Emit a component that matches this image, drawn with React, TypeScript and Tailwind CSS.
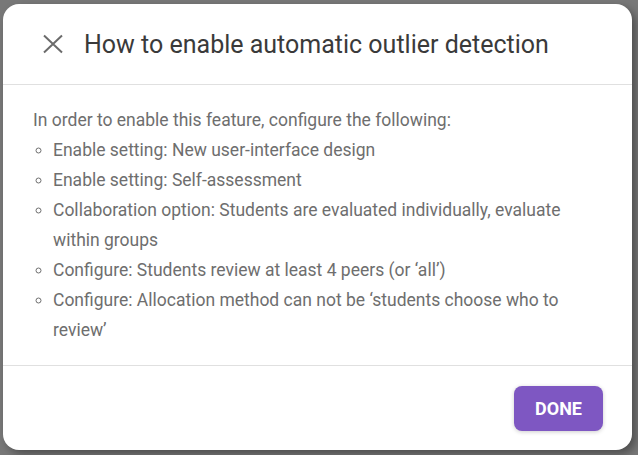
import React from "react";

export default function App() {
  const items = [
    "Enable setting: New user-interface design",
    "Enable setting: Self-assessment",
    "Collaboration option: Students are evaluated individually, evaluate within groups",
    "Configure: Students review at least 4 peers (or \u2018all\u2019)",
    "Configure: Allocation method can not be \u2018students choose who to review\u2019",
  ];
  return (
    <div
      className="relative w-[638px] h-[455px] overflow-hidden bg-[#787878]"
      style={{ fontFamily: "Roboto, 'Liberation Sans', sans-serif" }}
    >
      <div className="absolute left-[3px] top-[4px] w-[629px] h-[446px] rounded-[16px] bg-white shadow-[4px_4px_8px_rgba(0,0,0,0.35)] flex flex-col">
        <div className="h-[81px] flex items-center pl-[38px] border-b border-[#e0e0e0] shrink-0">
          <svg width="24" height="24" viewBox="0 0 24 24" className="text-[#6b6b6b]">
            <path d="M3 3.5 L21 20.5 M21 3.5 L3 20.5" stroke="currentColor" strokeWidth="2" fill="none" />
          </svg>
          <h1 className="ml-[19px] text-[25px] leading-none text-[#3a3a3a]">
            How to enable automatic outlier detection
          </h1>
        </div>
        <div className="px-[30px] pt-[20px] h-[281px] border-b border-[#e0e0e0] shrink-0 text-[17.5px] leading-[30px] text-[#6e6e6e]">
          <p>In order to enable this feature, configure the following:</p>
          <ul className="list-[circle] pl-[20px] pr-[40px]">
            {items.map((t) => (
              <li key={t} className="marker:text-[16px]">
                {t}
              </li>
            ))}
          </ul>
        </div>
        <div className="flex-1 flex justify-end items-start pr-[29px] pt-[20px]">
          <button className="w-[89px] h-[45px] rounded-[8px] bg-[#7e57c2] text-white text-[18px] font-bold shadow-[0_1px_4px_rgba(0,0,0,0.2)]">
            DONE
          </button>
        </div>
      </div>
    </div>
  );
}
